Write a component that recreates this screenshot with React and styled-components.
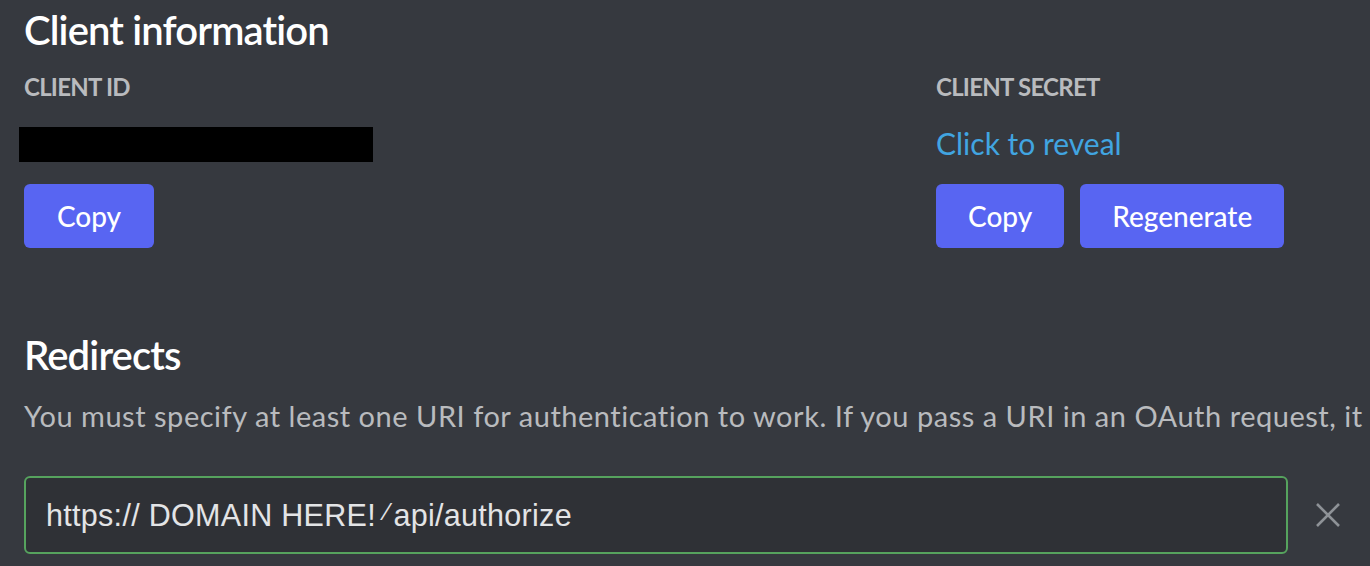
import React from "react";
import styled, { createGlobalStyle } from "styled-components";

const Global = createGlobalStyle`
  html, body {
    margin: 0;
    padding: 0;
    background: #36393f;
    overflow: hidden;
  }
  body {
    font-family: Lato, "Noto Sans", sans-serif;
    -webkit-font-smoothing: antialiased;
  }
`;

const Page = styled.div`
  width: 1370px;
  height: 566px;
  box-sizing: border-box;
  padding: 6px 0 0 24px;
  background: #36393f;
  overflow: hidden;
`;

const Heading = styled.h2`
  margin: ${(p) => p.$top || 0}px 0 0 0;
  font-family: Lato, sans-serif;
  font-size: 40px;
  line-height: 48px;
  font-weight: 600;
  letter-spacing: -0.85px;
  color: #ffffff;
`;

const Columns = styled.div`
  display: grid;
  grid-template-columns: 912px 1fr;
  margin-top: 18px;
`;

const Column = styled.div`
  display: flex;
  flex-direction: column;
  align-items: flex-start;
`;

const Label = styled.div`
  font-size: 24px;
  line-height: 30px;
  font-weight: 700;
  letter-spacing: -0.75px;
  text-transform: uppercase;
  color: #b9bbbe;
`;

const Redacted = styled.div`
  margin: 25px 0 0 -5px;
  width: 354px;
  height: 35px;
  background: #000;
`;

const RevealLink = styled.a`
  margin-top: 23px;
  font-size: 30px;
  line-height: 36px;
  color: #41a5e1;
  cursor: pointer;
`;

const ButtonRow = styled.div`
  display: flex;
  gap: 16px;
  margin-top: ${(p) => p.$top}px;
`;

const Button = styled.button`
  height: 64px;
  min-width: ${(p) => (p.$wide ? 130 : 120)}px;
  padding: 0 32px;
  border: none;
  border-radius: 6px;
  background: #5865f2;
  color: #ffffff;
  font-family: Lato, sans-serif;
  font-size: 28px;
  font-weight: 500;
  cursor: pointer;
`;

const Description = styled.p`
  margin: 20px 0 0 0;
  font-size: 29px;
  line-height: 34px;
  letter-spacing: 0.52px;
  color: #b9bbbe;
  white-space: nowrap;
`;

const InputRow = styled.div`
  display: flex;
  align-items: center;
  margin-top: 43px;
`;

const UriInput = styled.div`
  box-sizing: border-box;
  width: 1264px;
  height: 78px;
  padding: 0 20px;
  display: flex;
  align-items: center;
  border: 2px solid #56a35e;
  border-radius: 6px;
  background: #2f3136;
  color: #e3e4e6;
  font-family: "Liberation Sans", Arial, sans-serif;
  font-size: 30.5px;
  letter-spacing: 0.3px;
  white-space: pre;
`;

const Slash = styled.span`
  display: inline-block;
  font-size: 0.8em;
  padding: 0 4px 0 9px;
  transform: translateY(-3px);
`;

const RemoveButton = styled.button`
  margin-left: 28px;
  width: 24px;
  height: 24px;
  padding: 0;
  border: none;
  background: transparent;
  display: flex;
  align-items: center;
  justify-content: center;
  cursor: pointer;
`;

export default function App() {
  return (
    <Page>
      <Global />
      <Heading>Client information</Heading>
      <Columns>
        <Column>
          <Label>Client ID</Label>
          <Redacted />
          <ButtonRow $top={22}>
            <Button $wide>Copy</Button>
          </ButtonRow>
        </Column>
        <Column>
          <Label>Client Secret</Label>
          <RevealLink>Click to reveal</RevealLink>
          <ButtonRow $top={23}>
            <Button>Copy</Button>
            <Button>Regenerate</Button>
          </ButtonRow>
        </Column>
      </Columns>
      <Heading $top={83}>Redirects</Heading>
      <Description>
        You must specify at least one URI for authentication to work. If you pass a URI in an OAuth request, it
      </Description>
      <InputRow>
        <UriInput>
          https:// DOMAIN HERE!<Slash>⁄</Slash>api/authorize
        </UriInput>
        <RemoveButton aria-label="Remove">
          <svg width="24" height="24" viewBox="0 0 24 24">
            <path d="M1 1 L23 23 M23 1 L1 23" stroke="#8e9297" strokeWidth="2.6" fill="none" />
          </svg>
        </RemoveButton>
      </InputRow>
    </Page>
  );
}
